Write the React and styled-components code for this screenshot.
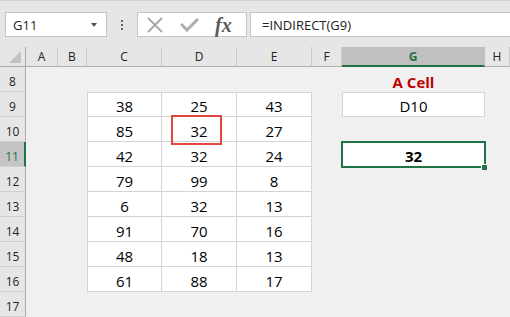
import React from 'react';
import styled, { createGlobalStyle } from 'styled-components';

const GlobalStyle = createGlobalStyle`
    body {
        margin: 0;
        background: #f0f0f0;
        font-family: "Open Sans", "Noto Sans", sans-serif;
    }
`;

const GREEN = '#217346';

const Window = styled.div`
    width: 510px;
    height: 317px;
    overflow: hidden;
    display: flex;
    flex-direction: column;
    background: #f0f0f0;
`;

const Toolbar = styled.div`
    height: 47px;
    box-sizing: border-box;
    border-top: 1px solid #d2d2d2;
    background: #e6e6e6;
    display: flex;
    align-items: flex-start;
    padding: 11px 0 0 5px;
`;

const NameBox = styled.div`
    width: 102px;
    height: 25px;
    box-sizing: border-box;
    background: #fff;
    border: 1px solid #c6c6c6;
    display: flex;
    align-items: center;
    justify-content: space-between;
    padding: 0 9px 0 7px;
    font-size: 13px;
    color: #222;
`;

const Caret = styled.span`
    width: 0;
    height: 0;
    border-left: 3px solid transparent;
    border-right: 3px solid transparent;
    border-top: 4px solid #555;
`;

const Grip = styled.div`
    width: 30px;
    height: 25px;
    display: flex;
    flex-direction: column;
    align-items: center;
    justify-content: center;
    gap: 2px;
    span {
        width: 2px;
        height: 2px;
        background: #666;
    }
`;

const FxBox = styled.div`
    width: 110px;
    height: 25px;
    box-sizing: border-box;
    background: #fff;
    border: 1px solid #c6c6c6;
    display: flex;
    align-items: center;
    padding-left: 9px;
    gap: 17px;
`;

const FxLabel = styled.span`
    font-family: "Liberation Serif", "DejaVu Serif", serif;
    font-style: italic;
    font-weight: bold;
    font-size: 20px;
    color: #595959;
    margin-left: -1px;
    line-height: 1;
`;

const FormulaInput = styled.div`
    flex: 1;
    height: 25px;
    box-sizing: border-box;
    margin-left: 3px;
    background: #fff;
    border: 1px solid #c6c6c6;
    border-right: none;
    display: flex;
    align-items: center;
    padding-left: 11px;
    font-size: 13px;
    color: #222;
`;

const Sheet = styled.div`
    display: grid;
    grid-template-columns: 26px 32px 29px 75px 75px 75px 30px 143px 25px;
    grid-template-rows: 20px repeat(10, 25px);
`;

const Corner = styled.div`
    position: relative;
    background: #e6e6e6;
    border-right: 1px solid #ababab;
    border-bottom: 1px solid #ababab;
    &::after {
        content: '';
        position: absolute;
        right: 4px;
        bottom: 3px;
        width: 0;
        height: 0;
        border-left: 12px solid transparent;
        border-bottom: 12px solid #c2c2c2;
    }
`;

const ColHead = styled.div`
    box-sizing: border-box;
    background: ${p => (p.$active ? '#c0c0c0' : '#e6e6e6')};
    border-right: 1px solid ${p => (p.$active ? '#c0c0c0' : '#c9c9c9')};
    border-bottom: ${p => (p.$active ? `2px solid ${GREEN}` : '1px solid #ababab')};
    display: flex;
    align-items: center;
    justify-content: center;
    font-size: 12px;
    color: ${p => (p.$active ? GREEN : '#222')};
    font-weight: ${p => (p.$active ? 700 : 400)};
`;

const RowHead = styled.div`
    box-sizing: border-box;
    background: ${p => (p.$active ? '#c4c4c4' : '#e6e6e6')};
    border-right: ${p => (p.$active ? `2px solid ${GREEN}` : '1px solid #ababab')};
    border-bottom: 1px solid #d0d0d0;
    display: flex;
    align-items: flex-end;
    justify-content: center;
    padding-bottom: 1px;
    font-size: 12px;
    color: ${p => (p.$active ? GREEN : '#222')};
`;

const Cell = styled.div`
    position: relative;
    box-sizing: border-box;
    display: flex;
    align-items: flex-end;
    justify-content: center;
    font-size: 15px;
    color: #000;
    background: ${p => (p.$boxed ? '#fff' : 'transparent')};
    border-right: ${p => (p.$boxed ? '1px solid #d4d4d4' : 'none')};
    border-bottom: ${p => (p.$boxed ? '1px solid #d4d4d4' : 'none')};
    border-top: ${p => (p.$top ? '1px solid #d4d4d4' : 'none')};
    border-left: ${p => (p.$left ? '1px solid #d4d4d4' : 'none')};
`;

const Title = styled(Cell)`
    color: #c00000;
    font-weight: 700;
`;

const Selected = styled(Cell)`
    margin: -1px;
    background: #fff;
    border: 2px solid ${GREEN};
    font-weight: 700;
    padding-bottom: 0;
`;

const FillHandle = styled.span`
    position: absolute;
    right: -3px;
    bottom: -4px;
    width: 5px;
    height: 5px;
    background: ${GREEN};
    border-left: 1px solid #fff;
    border-top: 1px solid #fff;
`;

const Highlight = styled.span`
    position: absolute;
    z-index: 2;
    left: 9px;
    top: -2px;
    width: 51px;
    height: 30px;
    box-sizing: border-box;
    border: 2px solid #e4463f;
`;

const cols = ['A', 'B', 'C', 'D', 'E', 'F', 'G', 'H'];

const data = {
    C: [38, 85, 42, 79, 6, 91, 48, 61],
    D: [25, 32, 32, 99, 32, 70, 18, 88],
    E: [43, 27, 24, 8, 13, 16, 13, 17],
};

const renderCell = (row, col) => {
    const key = `${col}${row}`;
    if (data[col] && row >= 9 && row <= 16) {
        return (
            <Cell key={key} $boxed $top={row === 9} $left={col === 'C'}>
                {data[col][row - 9]}
                {key === 'D10' && <Highlight />}
            </Cell>
        );
    }
    if (key === 'G8') return <Title key={key}>A Cell</Title>;
    if (key === 'G9') return <Cell key={key} $boxed $top $left>D10</Cell>;
    if (key === 'G11') {
        return (
            <Selected key={key}>
                32
                <FillHandle />
            </Selected>
        );
    }
    return <Cell key={key} />;
};

const rows = [8, 9, 10, 11, 12, 13, 14, 15, 16, 17];

const App = () => {
    return (
        <Window>
            <GlobalStyle />
            <Toolbar>
                <NameBox>
                    G11
                    <Caret />
                </NameBox>
                <Grip>
                    <span></span>
                    <span></span>
                    <span></span>
                </Grip>
                <FxBox>
                    <svg width="16" height="16" viewBox="0 0 16 16">
                        <path d="M1 1 L15 15 M15 1 L1 15" stroke="#a6a6a6" strokeWidth="1.8" fill="none" />
                    </svg>
                    <svg width="19" height="14" viewBox="0 0 19 14">
                        <path d="M1 6 L7 12 L18 1" stroke="#adadad" strokeWidth="3" fill="none" />
                    </svg>
                    <FxLabel>fx</FxLabel>
                </FxBox>
                <FormulaInput>=INDIRECT(G9)</FormulaInput>
            </Toolbar>
            <Sheet>
                <Corner />
                {cols.map(c => (
                    <ColHead key={c} $active={c === 'G'}>{c}</ColHead>
                ))}
                {rows.map(r => (
                    <React.Fragment key={r}>
                        <RowHead $active={r === 11}>{r}</RowHead>
                        {cols.map(c => renderCell(r, c))}
                    </React.Fragment>
                ))}
            </Sheet>
        </Window>
    );
};

export default App;
